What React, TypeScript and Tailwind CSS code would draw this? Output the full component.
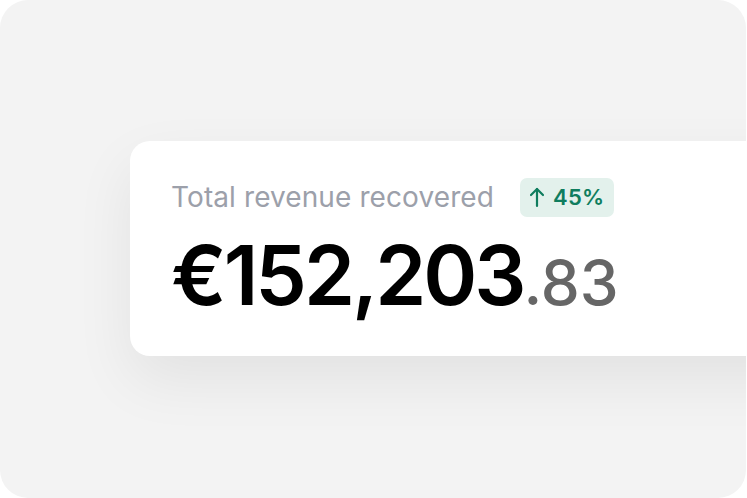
export default function App() {
  return (
    <div className="h-[498px] w-[747px] bg-white font-['Inter',sans-serif]">
      <div className="flex h-[498px] w-[746px] overflow-hidden rounded-[28px] bg-[#f3f3f3] pl-[130px] pt-[141px]">
        <div className="flex h-[215px] w-[700px] shrink-0 flex-col rounded-l-[20px] bg-white pl-[41px] pt-[36px] shadow-[0_24px_60px_rgba(0,0,0,0.07)]">
          <div className="flex items-center gap-[26px]">
            <span className="text-[28px] leading-[40px] tracking-[0.1px] text-[#9ca0aa]">
              Total revenue recovered
            </span>
            <span className="flex h-[39px] items-center gap-[8px] rounded-[7px] bg-[#e3f1ec] px-[9px] text-[22px] font-semibold tracking-[0.3px] text-[#0f7d5e]">
              <svg width="16" height="22" viewBox="0 0 16 22" fill="none" stroke="currentColor" strokeWidth="2.2" strokeLinecap="round" strokeLinejoin="round">
                <path d="M8 20V3" />
                <path d="M2 9l6-6 6 6" />
              </svg>
              45%
            </span>
          </div>
          <div className="mt-[18px] flex items-baseline leading-none">
            <span className="text-[82px] font-semibold tracking-[-3px] text-black">€152,203</span>
            <span className="text-[62px] font-medium text-[#666666]">.83</span>
          </div>
        </div>
      </div>
    </div>
  );
}
